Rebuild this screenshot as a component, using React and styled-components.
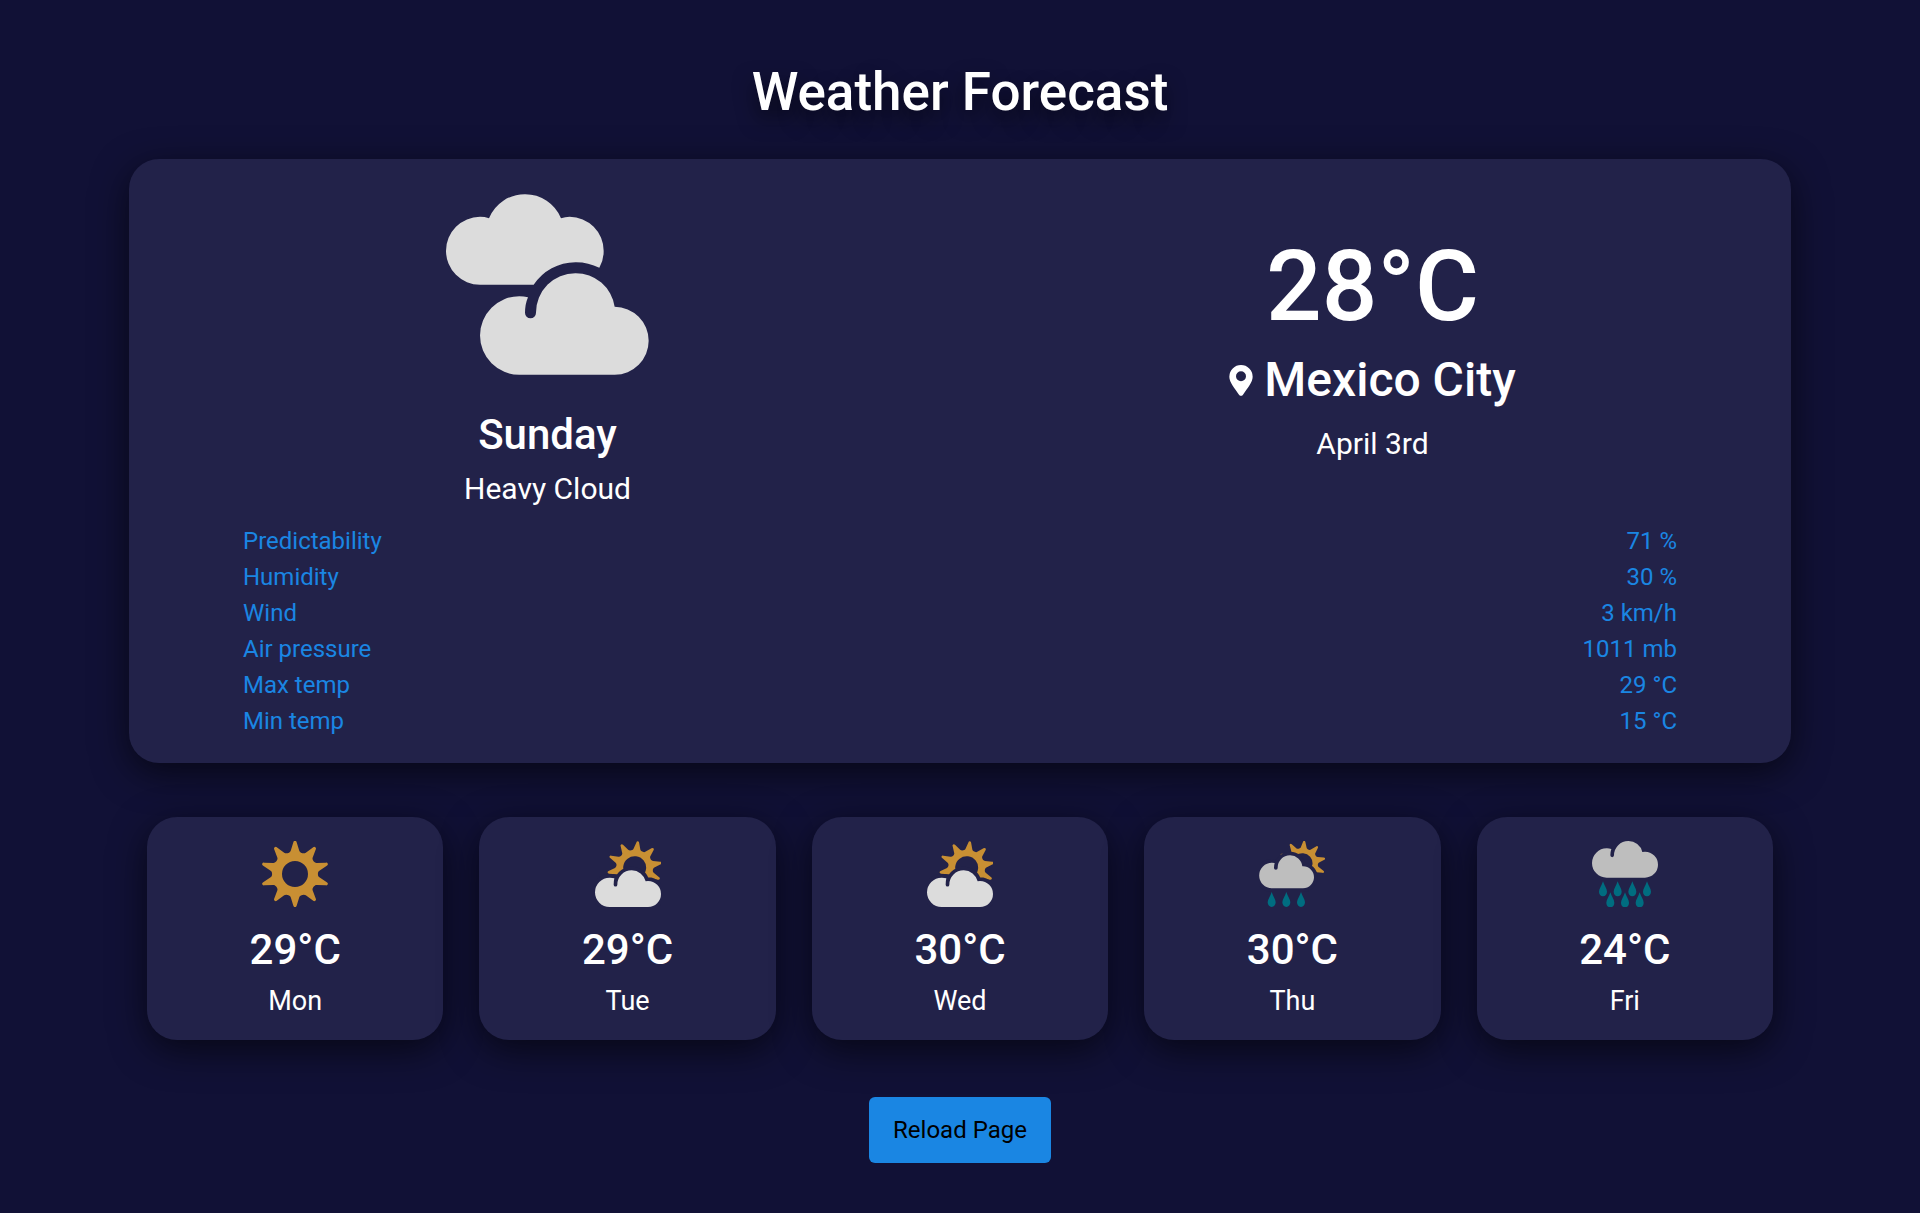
import React from "react";
import styled, { createGlobalStyle } from "styled-components";

const colors = {
  page: "#111136",
  card: "#222249",
  accent: "#1a86e3",
  sun: "#c88f33",
  cloud: "#dcdcdc",
  rainCloud: "#bebebe",
  drop: "#006d80",
};

const GlobalStyle = createGlobalStyle`
  * { box-sizing: border-box; }
  body {
    margin: 0;
    background: ${colors.page};
    color: #fff;
    font-family: Roboto, "Liberation Sans", sans-serif;
    font-size: 24px;
    line-height: 36px;
  }
  h1, h2, h3, p, dl, dt, dd, ul { margin: 0; padding: 0; }
`;

const Page = styled.main`
  display: flex;
  flex-direction: column;
  align-items: center;
  padding: 60px 129px 50px;
`;

const Title = styled.h1`
  margin-bottom: 35px;
  font-size: 53px;
  font-weight: 500;
  line-height: 64px;
  text-shadow: 0 10px 20px rgba(0, 0, 0, 0.6);
`;

const Card = styled.div`
  background: ${colors.card};
  border-radius: 30px;
  box-shadow: 0 10px 36px rgba(0, 0, 0, 0.6);
`;

const TodayCard = styled(Card).attrs({ as: "section" })`
  width: 100%;
  padding: 35px 6px 24px;
`;

const Summary = styled.div`
  display: grid;
  grid-template-columns: 1fr 1fr;
`;

const Column = styled.div`
  display: flex;
  flex-direction: column;
  align-items: center;
`;

const PlaceColumn = styled(Column)`
  padding-top: 37px;
`;

const DayName = styled.h2`
  margin-top: 35px;
  font-size: 42px;
  font-weight: 500;
  line-height: 50px;
`;

const Caption = styled.p`
  margin-top: 11px;
  font-size: 30px;
  line-height: 36px;
`;

const BigTemp = styled.h2`
  font-size: 98px;
  font-weight: 500;
  line-height: 112px;
`;

const City = styled.h3`
  display: flex;
  align-items: center;
  gap: 11px;
  margin-top: 8px;
  font-size: 48px;
  font-weight: 500;
  line-height: 58px;
`;

const PlaceDate = styled(Caption)`
  margin-top: 17px;
`;

const Details = styled.dl`
  padding: 0 108px;
  margin-top: 16px;
  color: ${colors.accent};
`;

const DetailRow = styled.div`
  display: flex;
  justify-content: space-between;
`;

const Forecast = styled.ul`
  display: grid;
  grid-template-columns: repeat(5, 1fr);
  gap: 36px;
  width: 100%;
  margin-top: 54px;
  padding: 0 18px;
  list-style: none;
`;

const DayCard = styled(Card).attrs({ as: "li" })`
  display: flex;
  flex-direction: column;
  align-items: center;
  padding: 24px 24px 21px;
`;

const DayTemp = styled.h3`
  margin-top: 18px;
  font-size: 42px;
  font-weight: 500;
  line-height: 50px;
`;

const DayLabel = styled.p`
  margin-top: 8px;
  font-size: 27px;
  line-height: 36px;
`;

const ReloadButton = styled.button`
  margin-top: 57px;
  padding: 15px 24px;
  border: 0;
  border-radius: 6px;
  background: ${colors.accent};
  color: #000;
  font: inherit;
  cursor: pointer;
`;

const Icon = styled.svg`
  display: block;
  width: ${(p) => p.$width}px;
  height: ${(p) => p.$height}px;
`;

/* Ten-rayed sun with a round hole, centred on the origin, outer radius 99. */
const polar = (deg, r) => {
  const a = (deg * Math.PI) / 180;
  return `${(r * Math.sin(a) * 1.04).toFixed(2)} ${(-r * Math.cos(a)).toFixed(2)}`;
};

const sunPath = (hole) => {
  let d = "";
  for (let i = 0; i < 10; i += 1) {
    const a = i * 36;
    d += `${i ? "L" : "M"}${polar(a - 3, 95)}Q${polar(a - 2.4, 99.5)} ${polar(a, 99.5)}`;
    d += `Q${polar(a + 2.4, 99.5)} ${polar(a + 3, 95)}L${polar(a + 10, 71)}`;
    d += `C${polar(a + 12, 65)} ${polar(a + 24, 65)} ${polar(a + 26, 71)}`;
  }
  return `${d}ZM${-hole} 0a${hole} ${hole} 0 1 0 ${hole * 2} 0a${hole} ${hole} 0 1 0 ${-hole * 2} 0Z`;
};

const Sun = ({ x = 0, y = 0, scale = 1, turn = 0, hole = 39 }) => (
  <path
    d={sunPath(hole)}
    fill={colors.sun}
    fillRule="evenodd"
    transform={`translate(${x} ${y}) rotate(${turn}) scale(${scale})`}
  />
);

const Cloud = ({ d, fill, halo }) => (
  <>
    {halo && <path d={d} fill={colors.card} stroke={colors.card} strokeWidth="22" />}
    <path d={d} fill={fill} />
  </>
);

const Drops = ({ points }) =>
  points.map(([x, y]) => (
    <path
      key={`${x}-${y}`}
      d={`M${x} ${y}C${x + 3} ${y + 11} ${x + 12} ${y + 22} ${x + 12} ${y + 31}C${x + 12} ${y + 39} ${x + 7} ${y + 45} ${x} ${y + 45}S${x - 12} ${y + 39} ${x - 12} ${y + 31}C${x - 12} ${y + 22} ${x - 3} ${y + 11} ${x} ${y}Z`}
      fill={colors.drop}
    />
  ));

const HeavyCloudIcon = () => (
  <Icon $width={203} $height={181} viewBox="78 72 609 542" role="img" aria-label="Heavy Cloud">
    <path
      fill={colors.cloud}
      d="M180 344A102 102 0 0 1 180 140A102 102 0 0 1 207 144A116 116 0 0 1 315 72A116 116 0 0 1 423 144A102 102 0 0 1 449 140A102 102 0 0 1 551 242A102 102 0 0 1 538 293A151 151 0 0 0 466 276A151 151 0 0 0 341 344Z"
    />
    <path
      fill={colors.cloud}
      d="M298 614A118 118 0 0 1 298 378A118 118 0 0 1 324 381Q315 402 315 428A16.5 16.5 0 0 0 348 428A118 118 0 0 1 466 309A118 118 0 0 1 584 410A102 102 0 0 1 584 614Z"
    />
  </Icon>
);

const ClearIcon = () => (
  <Icon $width={66} $height={66} viewBox="-99 -99 198 198" role="img" aria-label="Clear">
    <Sun />
  </Icon>
);

const LightCloudIcon = () => (
  <Icon $width={66} $height={66} viewBox="105 63 198 198" role="img" aria-label="Light Cloud">
    <Sun x={224} y={143} scale={0.8} turn={7} hole={43} />
    <Cloud
      halo
      fill={colors.cloud}
      d="M149 261A44 44 0 0 1 149 173A44 44 0 0 1 163 175Q161 184 161 194A5.5 5.5 0 0 0 172 194A43 43 0 0 1 215 151A43 43 0 0 1 257 184A39 39 0 0 1 264 183A39 39 0 0 1 264 261Z"
    />
  </Icon>
);

const ShowersIcon = () => (
  <Icon $width={66} $height={66} viewBox="87 64 198 198" role="img" aria-label="Showers">
    <Sun x={217} y={131} scale={0.68} turn={5} hole={45} />
    <Cloud
      halo
      fill={colors.rainCloud}
      d="M126 206A38.5 38.5 0 0 1 126 129A38.5 38.5 0 0 1 134 130Q132 136 132 145A5.5 5.5 0 0 0 143 145A37 37 0 0 1 180 107A37 37 0 0 1 217 140A33 33 0 0 1 219 140A33 33 0 0 1 219 206Z"
    />
    <Drops points={[[125, 217], [169, 217], [213, 217]]} />
  </Icon>
);

const HeavyRainIcon = () => (
  <Icon $width={66} $height={66} viewBox="96 63 198 198" role="img" aria-label="Heavy Rain">
    <Cloud
      fill={colors.rainCloud}
      d="M140 173A44 44 0 0 1 140 85A44 44 0 0 1 154 87Q151 96 151 106A5.5 5.5 0 0 0 162 106A43 43 0 0 1 205 63A43 43 0 0 1 247 96A39 39 0 0 1 255 95A39 39 0 0 1 255 173Z"
    />
    <Drops points={[[129, 184], [173, 184], [217, 184], [261, 184], [151, 217], [195, 217], [239, 217]]} />
  </Icon>
);

const PinIcon = () => (
  <Icon $width={24} $height={31} viewBox="0 0 72 93" aria-hidden="true">
    <path
      fill="#fff"
      fillRule="evenodd"
      d="M36 0A35 35 0 0 0 1 35C1 52 16 68 30 89Q36 96 42 89C56 68 71 52 71 35A35 35 0 0 0 36 0ZM36 19A15 15 0 1 1 36 49A15 15 0 1 1 36 19Z"
    />
  </Icon>
);

const details = [
  ["Predictability", "71 %"],
  ["Humidity", "30 %"],
  ["Wind", "3 km/h"],
  ["Air pressure", "1011 mb"],
  ["Max temp", "29 °C"],
  ["Min temp", "15 °C"],
];

const days = [
  { day: "Mon", temp: 29, Picture: ClearIcon },
  { day: "Tue", temp: 29, Picture: LightCloudIcon },
  { day: "Wed", temp: 30, Picture: LightCloudIcon },
  { day: "Thu", temp: 30, Picture: ShowersIcon },
  { day: "Fri", temp: 24, Picture: HeavyRainIcon },
];

export default function App() {
  return (
    <>
      <GlobalStyle />
      <Page>
        <Title>Weather Forecast</Title>
        <TodayCard>
          <Summary>
            <Column>
              <HeavyCloudIcon />
              <DayName>Sunday</DayName>
              <Caption>Heavy Cloud</Caption>
            </Column>
            <PlaceColumn>
              <BigTemp>28°C</BigTemp>
              <City>
                <PinIcon />
                Mexico City
              </City>
              <PlaceDate>April 3rd</PlaceDate>
            </PlaceColumn>
          </Summary>
          <Details>
            {details.map(([label, value]) => (
              <DetailRow key={label}>
                <dt>{label}</dt>
                <dd>{value}</dd>
              </DetailRow>
            ))}
          </Details>
        </TodayCard>
        <Forecast>
          {days.map(({ day, temp, Picture }) => (
            <DayCard key={day}>
              <Picture />
              <DayTemp>{temp}°C</DayTemp>
              <DayLabel>{day}</DayLabel>
            </DayCard>
          ))}
        </Forecast>
        <ReloadButton type="button" onClick={() => window.location.reload()}>
          Reload Page
        </ReloadButton>
      </Page>
    </>
  );
}
